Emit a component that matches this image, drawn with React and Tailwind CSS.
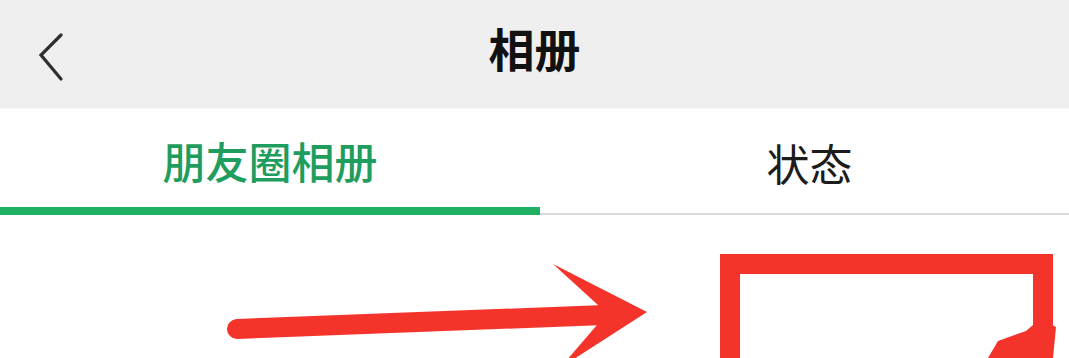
const font = { fontFamily: '"Noto Sans CJK SC", "Noto Sans", sans-serif' }

const BackIcon = () => (
  <svg width="28" height="50" viewBox="0 0 28 50" fill="none">
    <path d="M23 4 L3 24 L23 48" stroke="#2f2f2f" strokeWidth="3.2" strokeLinecap="round" strokeLinejoin="miter" />
  </svg>
)

const Annotations = () => (
  <svg className="absolute inset-0" width="1069" height="143" viewBox="0 0 1069 143">
    {/* arrow */}
    <line x1="237" y1="114" x2="604" y2="100" stroke="#f4332b" strokeWidth="20" strokeLinecap="round" />
    <polygon points="553,49 647,97 560,153 597,110 598,90" fill="#f4332b" />
    {/* box */}
    <rect x="730" y="49" width="313" height="200" fill="none" stroke="#f4332b" strokeWidth="20" />
    {/* pointer peeking in */}
    <polygon points="988,143 998,126 1026,116 1040,104 1056,112 1053,143" fill="#f4332b" />
  </svg>
)

export default function App() {
  return (
    <div className="w-[1069px] h-[358px] bg-white overflow-hidden" style={font}>
      <div className="h-[109px] bg-[#efefef] border-b border-[#f7f7f7] flex items-center relative">
        <div className="pl-[38px] pt-[4px] flex items-center">
          <BackIcon />
        </div>
        <div className="absolute inset-0 flex items-center justify-center">
          <span className="text-[46px] font-bold text-[#111] leading-none pb-[14px]">相册</span>
        </div>
      </div>
      <div className="flex h-[106px]">
        <div className="w-[540px] flex flex-col">
          <div className="flex-1 flex items-center justify-center pt-[4px]">
            <span className="text-[43px] font-medium text-[#1f9d5f] leading-none">朋友圈相册</span>
          </div>
          <div className="h-[8px] bg-[#1fb063]" />
        </div>
        <div className="flex-1 flex flex-col">
          <div className="flex-1 flex items-center justify-center pl-[10px] pt-[2px]">
            <span className="text-[43px] text-[#1c1c1c] leading-none">状态</span>
          </div>
          <div className="h-[2px] bg-[#dadada]" />
        </div>
      </div>
      <div className="relative h-[143px]">
        <Annotations />
      </div>
    </div>
  )
}
